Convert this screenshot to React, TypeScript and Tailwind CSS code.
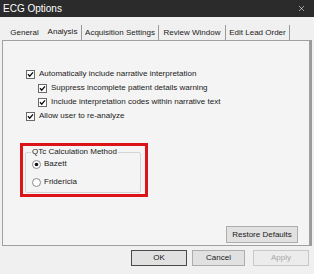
import { X } from "lucide-react"

function CheckBox() {
    return (
        <svg width="9" height="9" viewBox="0 0 9 9" className="shrink-0">
            <rect x="0.5" y="0.5" width="8" height="8" fill="#ffffff" stroke="#6a6a6a" />
            <path d="M2 4.3 L3.7 6.2 L7 2.4" fill="none" stroke="#111111" strokeWidth="1.4" />
        </svg>
    )
}

function Radio({ checked }: { checked?: boolean }) {
    return (
        <svg width="9" height="9" viewBox="0 0 9 9" className="shrink-0">
            <circle cx="4.5" cy="4.5" r="4" fill="#ffffff" stroke="#8a8a8a" />
            {checked && <circle cx="4.5" cy="4.5" r="1.8" fill="#111111" />}
        </svg>
    )
}

function CheckRow({ label, indent }: { label: string, indent?: boolean }) {
    return (
        <div className={`flex items-center gap-[4px] h-[14px] ${indent ? "ml-[35px]" : "ml-[23px]"}`}>
            <CheckBox />
            <span>{label}</span>
        </div>
    )
}

const tabs = [
    { label: "General", w: "w-[39px]" },
    { label: "Analysis", w: "w-[38px]", active: true },
    { label: "Acquisition Settings", w: "w-[77px]" },
    { label: "Review Window", w: "w-[67px]" },
    { label: "Edit Lead Order", w: "w-[64px]" },
]

export default function App() {
    return (
        <div className="w-[314px] h-[274px] bg-[#f0f0f0] overflow-hidden flex flex-col text-[8px] text-[#1a1a1a] [font-family:'Liberation_Sans',Arial,sans-serif]">
            {/* Title bar */}
            <div className="h-[17px] bg-[#2b2b2b] flex items-center justify-between pl-[3px] pr-[8px] text-white">
                <span className="text-[10px]">ECG Options</span>
                <X className="w-[9px] h-[9px]" strokeWidth={1.5} />
            </div>

            {/* Tabs */}
            <div className="h-[23px] flex items-end pl-[5px]">
                {tabs.map((t, i) => (
                    <div
                        key={t.label}
                        className={`${t.w} h-[15px] flex justify-center ${i > 0 ? "border-r border-[#9a9a9a]" : ""} ${t.active ? "items-start pt-[1px]" : "items-center"}`}
                    >
                        {t.label}
                    </div>
                ))}
            </div>

            {/* Panel */}
            <div className="ml-[2px] w-[308px] h-[206px] border border-[#a0a0a0] bg-[#f4f4f4] shadow-[2px_0_0_#9a9a9a] flex flex-col pt-[26px]">
                <CheckRow label="Automatically include narrative interpretation" />
                <CheckRow label="Suppress incomplete patient details warning" indent />
                <CheckRow label="Include interpretation codes within narrative text" indent />
                <CheckRow label="Allow user to re-analyze" />

                <div className="mt-[20px] ml-[17px] w-[128px] h-[54px] border-[3px] border-[#dc1418] pt-[1px] pl-[2px]">
                    <fieldset className="w-[116px] border border-[#d4d4d4] rounded-[2px] pb-[4px] pl-[6px]">
                        <legend className="-ml-[1px] px-[1px] leading-[10px]">QTc Calculation Method</legend>
                        <div className="flex flex-col gap-[6px] pt-[1px]">
                            <div className="flex items-center gap-[3px] h-[12px]">
                                <Radio checked />
                                <span>Bazett</span>
                            </div>
                            <div className="flex items-center gap-[3px] h-[12px]">
                                <Radio />
                                <span>Fridericia</span>
                            </div>
                        </div>
                    </fieldset>
                </div>

                <div className="mt-auto mb-[2px] mr-[11px] flex justify-end">
                    <button className="w-[72px] h-[17px] border border-[#adadad] bg-[#e1e1e1] flex items-center justify-center">
                        Restore Defaults
                    </button>
                </div>
            </div>

            {/* Dialog buttons */}
            <div className="flex pl-[131px] pt-[4px] gap-[5px]">
                <button className="w-[56px] h-[16px] border border-[#4a4a4a] bg-[#e1e1e1] flex items-center justify-center">OK</button>
                <button className="w-[53px] h-[16px] border border-[#adadad] bg-[#e1e1e1] flex items-center justify-center">Cancel</button>
                <button className="w-[56px] h-[16px] border border-[#c8c8c8] bg-[#ececec] text-[#a8a8a8] flex items-center justify-center ml-[3px]">Apply</button>
            </div>
        </div>
    )
}
